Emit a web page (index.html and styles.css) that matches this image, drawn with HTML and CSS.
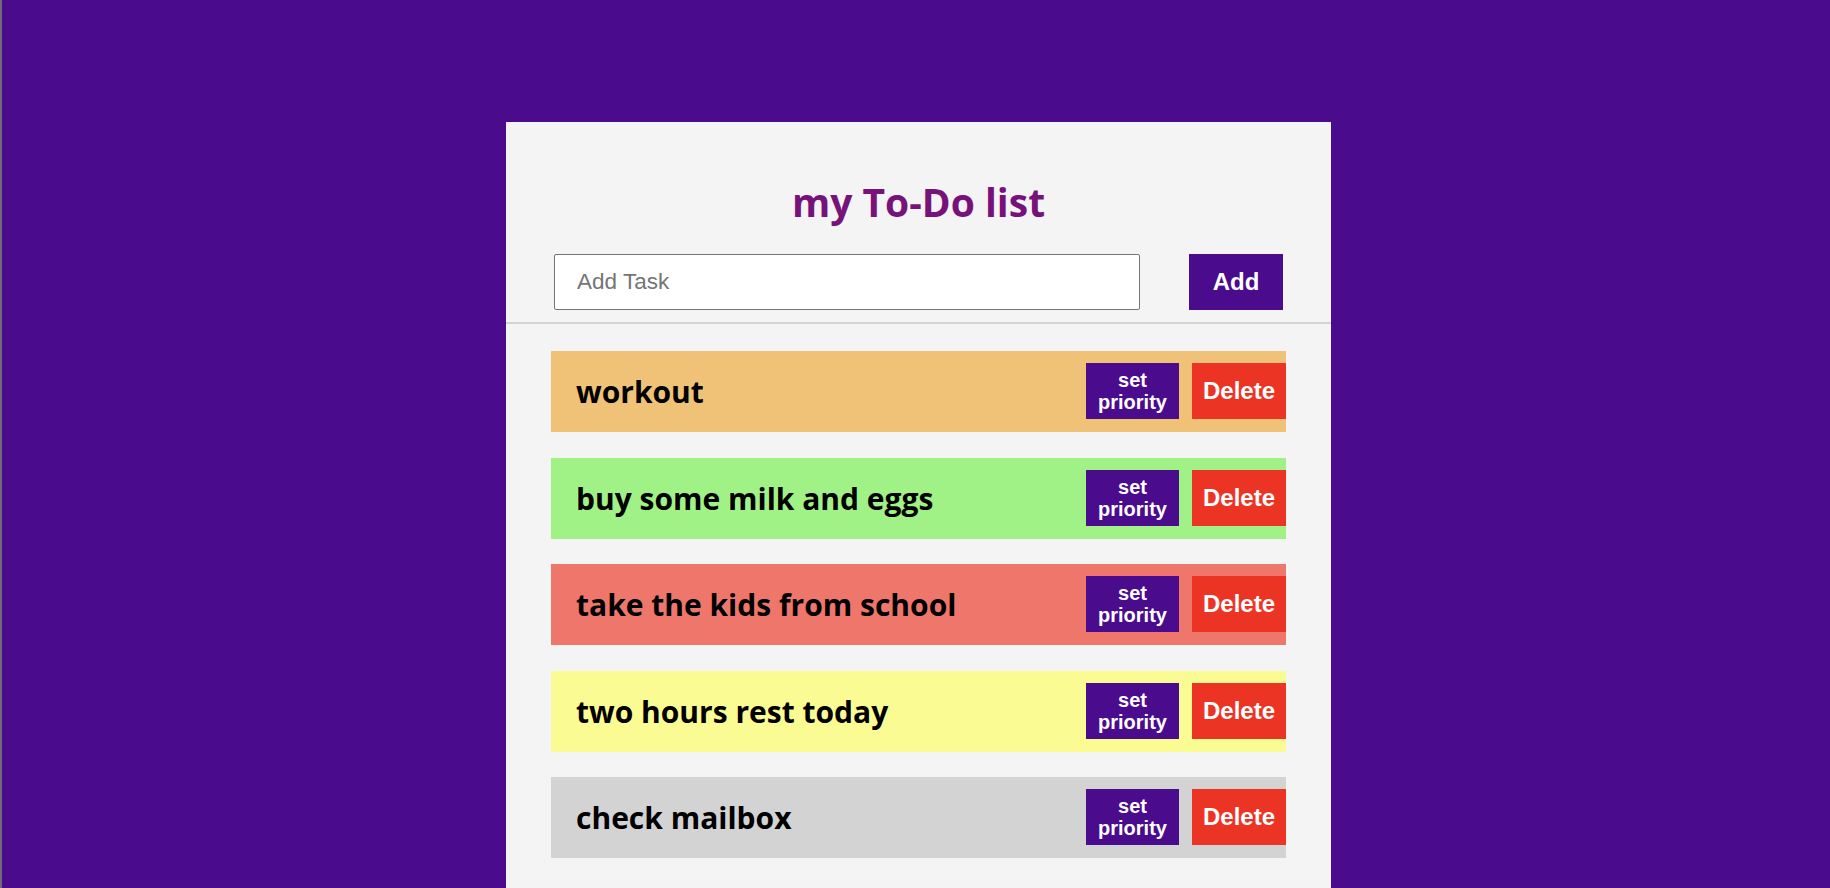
FILE: index.html
```html
<!DOCTYPE html>
<html lang="en">
<head>
<meta charset="utf-8">
<title>my To-Do list</title>
<link rel="stylesheet" href="styles.css">
</head>
<body>
  <main class="card">
    <header class="card-head">
      <h1 class="title">my To-Do list</h1>
      <form class="add-form">
        <input class="task-input" type="text" placeholder="Add Task">
        <button class="add-btn" type="button">Add</button>
      </form>
    </header>
    <ul class="task-list">
      <li class="task task-orange">
        <span class="task-text">workout</span>
        <div class="task-actions">
          <button class="btn-priority" type="button">set priority</button>
          <button class="btn-delete" type="button">Delete</button>
        </div>
      </li>
      <li class="task task-green">
        <span class="task-text">buy some milk and eggs</span>
        <div class="task-actions">
          <button class="btn-priority" type="button">set priority</button>
          <button class="btn-delete" type="button">Delete</button>
        </div>
      </li>
      <li class="task task-red">
        <span class="task-text">take the kids from school</span>
        <div class="task-actions">
          <button class="btn-priority" type="button">set priority</button>
          <button class="btn-delete" type="button">Delete</button>
        </div>
      </li>
      <li class="task task-yellow">
        <span class="task-text">two hours rest today</span>
        <div class="task-actions">
          <button class="btn-priority" type="button">set priority</button>
          <button class="btn-delete" type="button">Delete</button>
        </div>
      </li>
      <li class="task task-gray">
        <span class="task-text">check mailbox</span>
        <div class="task-actions">
          <button class="btn-priority" type="button">set priority</button>
          <button class="btn-delete" type="button">Delete</button>
        </div>
      </li>
    </ul>
  </main>
</body>
</html>
```

FILE: styles.css
```css
html, body {
  margin: 0;
  padding: 0;
  height: 100%;
  overflow: hidden;
}

body {
  background: #4a0b8c;
  border-left: 2px solid #6e6a78;
  box-sizing: border-box;
  font-family: "Open Sans", "Noto Sans", sans-serif;
}

.card {
  width: 825px;
  min-height: 766px;
  margin: 122px 0 0 504px;
  background: #f4f4f4;
}

.card-head {
  padding: 0 48px 12px;
  border-bottom: 2px solid #d3d3d3;
}

.title {
  margin: 0;
  padding-top: 56px;
  height: 132px;
  box-sizing: border-box;
  text-align: center;
  color: #77127a;
  font-size: 39px;
  font-weight: 700;
  line-height: 48px;
}

.add-form {
  display: flex;
  justify-content: space-between;
  align-items: center;
  margin: 0;
}

.task-input {
  width: 586px;
  height: 56px;
  box-sizing: border-box;
  border: 1px solid #767676;
  border-radius: 2px;
  padding: 0 22px;
  font-family: "Liberation Sans", Arial, sans-serif;
  font-size: 22.5px;
  background: #fff;
  outline: none;
}

.task-input::placeholder {
  color: #757575;
}

.add-btn {
  width: 94px;
  height: 56px;
  border: none;
  background: #4a0b8c;
  color: #fff;
  font-family: "Liberation Sans", Arial, sans-serif;
  font-size: 24px;
  font-weight: 700;
  padding: 0;
}

.task-list {
  list-style: none;
  margin: 0;
  padding: 27px 45px 0;
  display: flex;
  flex-direction: column;
  gap: 25.5px;
}

.task {
  height: 81px;
  display: flex;
  align-items: center;
  justify-content: space-between;
  padding-left: 25px;
  overflow: hidden;
}

.task-orange { background: #efc278; }
.task-green { background: #a0f287; }
.task-red { background: #ef766b; }
.task-yellow { background: #fbfb93; }
.task-gray { background: #d3d3d3; }

.task-text {
  color: #000;
  font-size: 30px;
  font-weight: 700;
}

.task-actions {
  display: flex;
  gap: 13px;
  align-self: flex-start;
  margin-top: 12px;
}

.btn-priority,
.btn-delete {
  height: 56px;
  border: none;
  color: #fff;
  font-family: "Liberation Sans", Arial, sans-serif;
  font-weight: 700;
  padding: 0;
}

.btn-priority {
  width: 93px;
  background: #4a0b8c;
  font-size: 20px;
  line-height: 22px;
}

.btn-delete {
  width: 94px;
  background: #ec3424;
  font-size: 24px;
}
```
